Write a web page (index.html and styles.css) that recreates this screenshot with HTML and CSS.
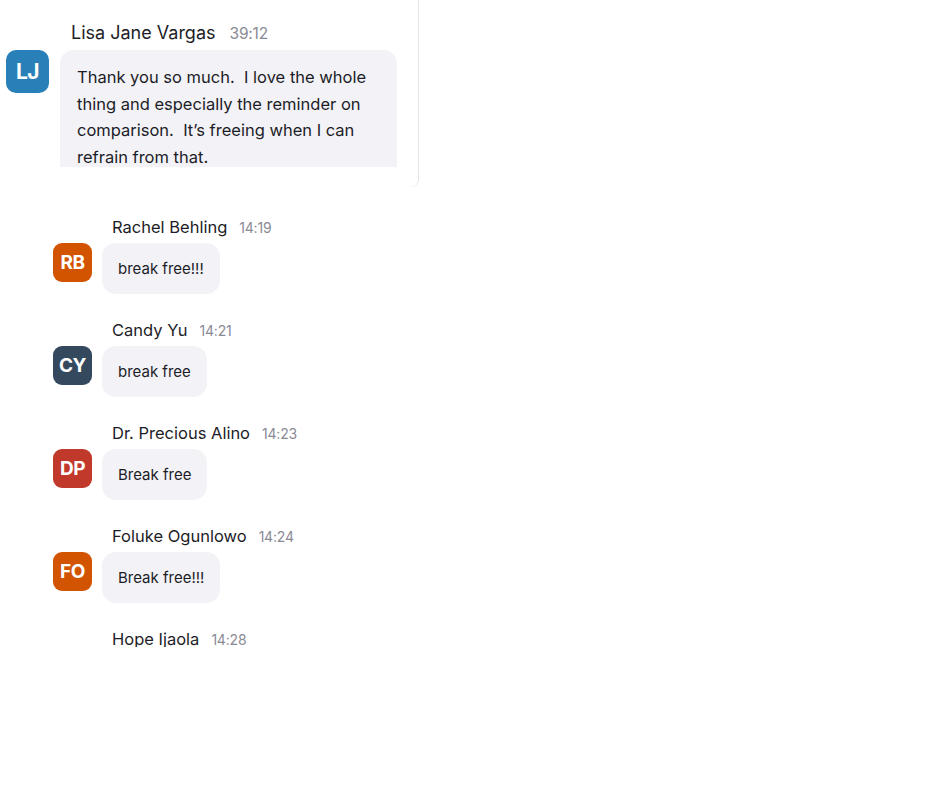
FILE: index.html
```html
<!DOCTYPE html>
<html lang="en">
    <head>
        <meta charset="utf-8"/>
        <meta name="viewport" content="width=device-width, initial-scale=1">
        <title>Chat</title>
        <link rel="stylesheet" href="styles.css">
    </head>
    <body>
        <div class="thread">
            <section class="pinned">
                <div class="pinned-inner">
                    <div class="msg msg-large">
                        <div class="msg-head">
                            <span class="msg-name">Lisa Jane Vargas</span>
                            <span class="msg-time">39:12</span>
                        </div>
                        <div class="avatar avatar-blue">LJ</div>
                        <div class="bubble">Thank you so much.&nbsp; I love the whole thing and especially the reminder on comparison.&nbsp; It’s freeing when I can refrain from that.</div>
                    </div>
                </div>
            </section>

            <section class="feed">
                <div class="msg">
                    <div class="msg-head">
                        <span class="msg-name">Rachel Behling</span>
                        <span class="msg-time">14:19</span>
                    </div>
                    <div class="avatar avatar-orange">RB</div>
                    <div class="bubble">break free!!!</div>
                </div>
                <div class="msg">
                    <div class="msg-head">
                        <span class="msg-name">Candy Yu</span>
                        <span class="msg-time">14:21</span>
                    </div>
                    <div class="avatar avatar-navy">CY</div>
                    <div class="bubble">break free</div>
                </div>
                <div class="msg">
                    <div class="msg-head">
                        <span class="msg-name">Dr. Precious Alino</span>
                        <span class="msg-time">14:23</span>
                    </div>
                    <div class="avatar avatar-red">DP</div>
                    <div class="bubble">Break free</div>
                </div>
                <div class="msg">
                    <div class="msg-head">
                        <span class="msg-name">Foluke Ogunlowo</span>
                        <span class="msg-time">14:24</span>
                    </div>
                    <div class="avatar avatar-orange">FO</div>
                    <div class="bubble">Break free!!!</div>
                </div>
                <div class="msg">
                    <div class="msg-head">
                        <span class="msg-name">Hope Ijaola</span>
                        <span class="msg-time">14:28</span>
                    </div>
                </div>
            </section>
        </div>
    </body>
</html>
```

FILE: styles.css
```css
:root {
    --text: #1d1d27;
    --muted: #8a8a94;
    --bubble: #f2f2f7;
}

html, body {
    margin: 0;
    padding: 0;
    background: #fff;
    font-family: "Inter", "Noto Sans", sans-serif;
    color: var(--text);
}

.thread {
    display: flex;
    flex-direction: column;
}

/* top card, cut off by the viewport */
.pinned {
    width: 419px;
    height: 187px;
    box-sizing: border-box;
    padding-bottom: 20px;
    border-right: 1px solid #e4e4ea;
    border-bottom-right-radius: 8px;
}

.pinned-inner {
    height: 167px;
    overflow: hidden;
    padding: 22px 0 0 6px;
    box-sizing: border-box;
}

.feed {
    height: 430px;
    margin-top: 30px;
    overflow: hidden;
    padding-left: 53px;
    display: flex;
    flex-direction: column;
    gap: 26px;
}

.msg {
    display: grid;
    grid-template-columns: 39px auto;
    column-gap: 10px;
    row-gap: 5px;
    justify-content: start;
    align-items: start;
}

.msg-head {
    grid-column: 2;
    grid-row: 1;
    padding-left: 10px;
    display: flex;
    align-items: baseline;
    gap: 12px;
    line-height: 20px;
    white-space: nowrap;
}

.msg-name {
    font-size: 16.5px;
}

.msg-time {
    font-size: 14px;
    color: var(--muted);
    letter-spacing: -0.2px;
}

.avatar {
    grid-column: 1;
    grid-row: 2;
    width: 39px;
    height: 39px;
    border-radius: 9px;
    color: #fff;
    font-weight: 700;
    font-size: 19px;
    display: flex;
    align-items: center;
    justify-content: center;
    letter-spacing: -0.5px;
}

.avatar-blue { background: #2980b9; }
.avatar-orange { background: #d35400; }
.avatar-navy { background: #34495e; }
.avatar-red { background: #c0392b; }

.bubble {
    grid-column: 2;
    grid-row: 2;
    justify-self: start;
    background: var(--bubble);
    border-radius: 14px;
    padding: 16px;
    font-size: 15px;
    line-height: 19px;
}

/* the pinned one is drawn a bit larger */
.msg-large {
    grid-template-columns: 43px auto;
    column-gap: 11px;
}

.msg-large .msg-head {
    padding-left: 11px;
    line-height: 22px;
    gap: 14px;
}

.msg-large .msg-name {
    font-size: 18px;
}

.msg-large .msg-time {
    font-size: 15.5px;
}

.msg-large .avatar {
    width: 43px;
    height: 43px;
    border-radius: 10px;
    font-size: 21px;
}

.msg-large .bubble {
    width: 303px;
    padding: 14px 17px;
    font-size: 16.5px;
    line-height: 26.5px;
}
```
